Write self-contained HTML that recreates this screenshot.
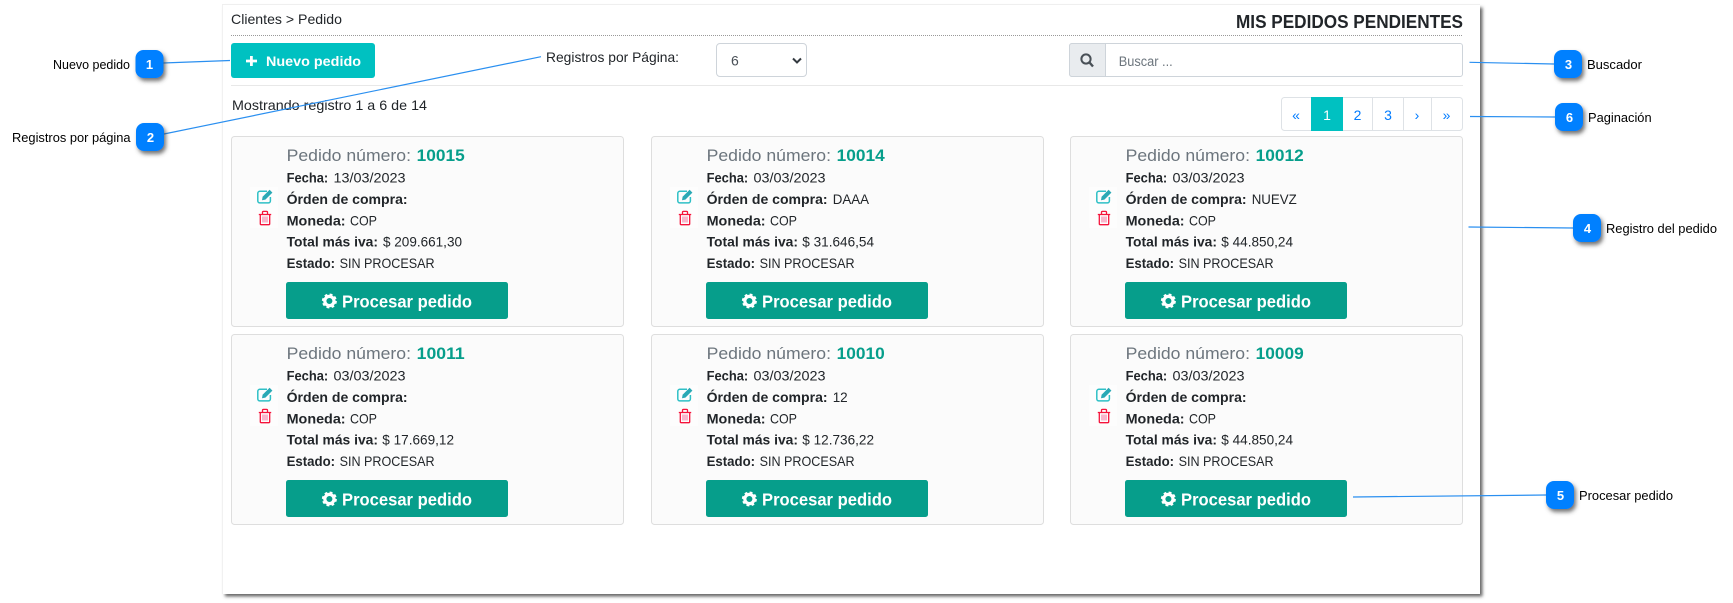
<!DOCTYPE html>
<html lang="es"><head><meta charset="utf-8"><title>Mis pedidos pendientes</title>
<style>
html,body{margin:0;padding:0;background:#fff;width:1733px;height:603px;overflow:hidden}
svg{display:block;font-family:"Liberation Sans",Arial,sans-serif}
.d{font-size:14px;fill:#212529}
.b{font-size:13.5px;fill:#212529;font-weight:bold}
.t{font-size:17px;fill:#6c757d}
.n{font-size:17px;fill:#069e8b;font-weight:bold}
.p{font-size:17.5px;fill:#fff;font-weight:bold}
.c{font-size:12.5px;fill:#000}
.w{font-size:13px;fill:#fff;font-weight:bold;text-anchor:middle}
.l{font-size:14px;fill:#007bff;text-anchor:middle}
.cl{stroke:#2a8ff0;stroke-width:1.2;fill:none}
.bb{fill:#0080ff;filter:url(#bs)}
</style></head><body>
<svg width="1733" height="603" viewBox="0 0 1733 603" xmlns="http://www.w3.org/2000/svg">
<defs>
<filter id="ps" x="-2%" y="-2%" width="104%" height="104%"><feDropShadow dx="2.5" dy="2.5" stdDeviation="1.5" flood-color="#555" flood-opacity=".9"/></filter>
<filter id="bs" x="-30%" y="-30%" width="170%" height="170%"><feDropShadow dx="2" dy="3" stdDeviation="2" flood-color="#444" flood-opacity=".75"/></filter>
<g id="card">
<rect x="231.5" y="136.5" width="392" height="190" rx="3" fill="#fbfbfb" stroke="#dedede"/>
<rect x="250" y="187" width="28" height="41" fill="#fdfdfd"/>
<path d="M267 191.3H259.8a2 2 0 0 0-2 2v7.6a2 2 0 0 0 2 2h8.6a2 2 0 0 0 2-2V197" fill="none" stroke="#2fc0c6" stroke-width="1.5"/>
<path d="M262.6 196.8l7-7 2.8 2.8-7 7-3.4.6z" fill="#2aa9b5"/>
<path d="M260.3 214.5v9.2a1 1 0 0 0 1 1h7.4a1 1 0 0 0 1-1v-9.2M258.8 214.5h12.4M262.5 214v-1.6a1 1 0 0 1 1-1h3a1 1 0 0 1 1 1v1.6" fill="none" stroke="#f5143c" stroke-width="1.3"/>
<path d="M263 216.5v6M265 216.5v6M267 216.5v6" stroke="#f5709a" stroke-width="1"/>
<rect x="286" y="282" width="222" height="37" rx="2.5" fill="#069e8b"/>
<circle cx="329.4" cy="301" r="5.8" fill="none" stroke="#fff" stroke-width="3.4" stroke-dasharray="2.5 2.06"/>
<circle cx="329.4" cy="301" r="4.6" fill="none" stroke="#fff" stroke-width="3.2"/>
<text x="342" y="307.3" class="p" textLength="130" lengthAdjust="spacingAndGlyphs">Procesar pedido</text>
<text x="286.6" y="182.7" class="b" textLength="41.6" lengthAdjust="spacingAndGlyphs">Fecha:</text>
<text x="286.6" y="204" class="b" textLength="121" lengthAdjust="spacingAndGlyphs">Órden de compra:</text>
<text x="286.6" y="225.3" class="b" textLength="59" lengthAdjust="spacingAndGlyphs">Moneda:</text>
<text x="350" y="225.3" class="d" textLength="27" lengthAdjust="spacingAndGlyphs">COP</text>
<text x="286.6" y="246.7" class="b" textLength="91.4" lengthAdjust="spacingAndGlyphs">Total más iva:</text>
<text x="286.6" y="268" class="b" textLength="48.5" lengthAdjust="spacingAndGlyphs">Estado:</text>
<text x="339.6" y="268" class="d" textLength="95" lengthAdjust="spacingAndGlyphs">SIN PROCESAR</text>
<text x="286.6" y="161" class="t" textLength="124.4" lengthAdjust="spacingAndGlyphs">Pedido número:</text>
</g>
</defs>

<rect x="222.5" y="5" width="1257.5" height="589" fill="#fff" filter="url(#ps)"/>
<path d="M222 4.5H1480" stroke="#efefef"/><path d="M222.5 5V594" stroke="#f1f1f1"/>

<text x="231" y="24" class="d" fill="#333" textLength="111" lengthAdjust="spacingAndGlyphs">Clientes &gt; Pedido</text>
<text x="1236" y="28" style="font-size:18px;font-weight:bold;fill:#212529" textLength="227" lengthAdjust="spacingAndGlyphs">MIS PEDIDOS PENDIENTES</text>
<path d="M231 35.5H1463" stroke="#999" stroke-dasharray="1 1"/>

<rect x="231" y="43" width="144" height="35" rx="3" fill="#00c1c1"/>
<path d="M251.4 56v10M246 61h11" stroke="#fff" stroke-width="2.8"/>
<text x="266" y="66" style="font-size:14px;font-weight:bold;fill:#fff" textLength="95" lengthAdjust="spacingAndGlyphs">Nuevo pedido</text>

<text x="546" y="62" class="d" textLength="133" lengthAdjust="spacingAndGlyphs">Registros por Página:</text>
<rect x="716.5" y="43.5" width="90" height="33" rx="3.5" fill="#fff" stroke="#ced4da"/>
<text x="731" y="65.7" style="font-size:14px;fill:#495057">6</text>
<path d="M793 58.5l4 4 4-4" fill="none" stroke="#343a40" stroke-width="2"/>

<path d="M1072 43.5H1460a2.5 2.5 0 0 1 2.5 2.5V74a2.5 2.5 0 0 1-2.5 2.5H1072a2.5 2.5 0 0 1-2.5-2.5V46a2.5 2.5 0 0 1 2.5-2.5z" fill="#fff" stroke="#ced4da"/>
<path d="M1072 43.5H1105.5V76.5H1072a2.5 2.5 0 0 1-2.5-2.5V46a2.5 2.5 0 0 1 2.5-2.5z" fill="#e9ecef" stroke="#ced4da"/>
<circle cx="1086" cy="59" r="4.6" fill="none" stroke="#495057" stroke-width="2"/>
<path d="M1089.5 62.5l3.5 4" stroke="#495057" stroke-width="2.4"/>
<text x="1118.7" y="66" style="font-size:13.5px;fill:#6c757d" textLength="54" lengthAdjust="spacingAndGlyphs">Buscar ...</text>

<path d="M231 85.5H1463" stroke="#e8e8e8"/>
<text x="232" y="110" class="d" textLength="195" lengthAdjust="spacingAndGlyphs">Mostrando registro 1 a 6 de 14</text>

<rect x="1281.5" y="97.5" width="181" height="33" rx="3" fill="#fff" stroke="#dee2e6"/>
<rect x="1311" y="97" width="32" height="34" fill="#00c1c1"/>
<path d="M1372.5 98V130M1403.5 98V130M1431.5 98V130" stroke="#dee2e6"/>
<text x="1296" y="120" class="l">«</text>
<text x="1327" y="120" class="l" style="fill:#fff">1</text>
<text x="1357.5" y="120" class="l">2</text>
<text x="1388" y="120" class="l">3</text>
<text x="1417" y="120" class="l">›</text>
<text x="1446.5" y="120" class="l">»</text>

<use href="#card"/>
<text x="416.7" y="161" class="n" textLength="48" lengthAdjust="spacingAndGlyphs">10015</text>
<text x="333.5" y="182.7" class="d" textLength="72" lengthAdjust="spacingAndGlyphs">13/03/2023</text>
<text x="383" y="246.7" class="d" textLength="79" lengthAdjust="spacingAndGlyphs">$ 209.661,30</text>

<g transform="translate(420,0)"><use href="#card"/>
<text x="416.7" y="161" class="n" textLength="48" lengthAdjust="spacingAndGlyphs">10014</text>
<text x="333.5" y="182.7" class="d" textLength="72" lengthAdjust="spacingAndGlyphs">03/03/2023</text>
<text x="412.7" y="204" class="d" textLength="36.3" lengthAdjust="spacingAndGlyphs">DAAA</text>
<text x="382.3" y="246.7" class="d" textLength="71.7" lengthAdjust="spacingAndGlyphs">$ 31.646,54</text></g>

<g transform="translate(839,0)"><use href="#card"/>
<text x="416.7" y="161" class="n" textLength="48" lengthAdjust="spacingAndGlyphs">10012</text>
<text x="333.5" y="182.7" class="d" textLength="72" lengthAdjust="spacingAndGlyphs">03/03/2023</text>
<text x="412.7" y="204" class="d" textLength="45" lengthAdjust="spacingAndGlyphs">NUEVZ</text>
<text x="382.3" y="246.7" class="d" textLength="71.7" lengthAdjust="spacingAndGlyphs">$ 44.850,24</text></g>

<g transform="translate(0,198)"><use href="#card"/>
<text x="416.7" y="161" class="n" textLength="48" lengthAdjust="spacingAndGlyphs">10011</text>
<text x="333.5" y="182.7" class="d" textLength="72" lengthAdjust="spacingAndGlyphs">03/03/2023</text>
<text x="382.3" y="246.7" class="d" textLength="71.7" lengthAdjust="spacingAndGlyphs">$ 17.669,12</text></g>

<g transform="translate(420,198)"><use href="#card"/>
<text x="416.7" y="161" class="n" textLength="48" lengthAdjust="spacingAndGlyphs">10010</text>
<text x="333.5" y="182.7" class="d" textLength="72" lengthAdjust="spacingAndGlyphs">03/03/2023</text>
<text x="412.7" y="204" class="d" textLength="15" lengthAdjust="spacingAndGlyphs">12</text>
<text x="382.3" y="246.7" class="d" textLength="71.7" lengthAdjust="spacingAndGlyphs">$ 12.736,22</text></g>

<g transform="translate(839,198)"><use href="#card"/>
<text x="416.7" y="161" class="n" textLength="48" lengthAdjust="spacingAndGlyphs">10009</text>
<text x="333.5" y="182.7" class="d" textLength="72" lengthAdjust="spacingAndGlyphs">03/03/2023</text>
<text x="382.3" y="246.7" class="d" textLength="71.7" lengthAdjust="spacingAndGlyphs">$ 44.850,24</text></g>

<path class="cl" d="M163 63L230 60.5"/>
<path class="cl" d="M164 134L541 56.7"/>
<path class="cl" d="M1469.5 62.3L1554 64"/>
<path class="cl" d="M1470 116.5L1555 117"/>
<path class="cl" d="M1468.5 227L1573 228"/>
<path class="cl" d="M1353 497L1546 495"/>

<rect class="bb" x="135.5" y="50" width="28" height="28" rx="8"/>
<text x="149.5" y="69" class="w">1</text>
<text x="53" y="69" class="c" textLength="77" lengthAdjust="spacingAndGlyphs">Nuevo pedido</text>

<rect class="bb" x="136" y="123" width="28" height="28" rx="8"/>
<text x="150.5" y="142" class="w">2</text>
<text x="12" y="142" class="c" textLength="118.6" lengthAdjust="spacingAndGlyphs">Registros por página</text>

<rect class="bb" x="1554" y="50" width="28" height="28" rx="8"/>
<text x="1568.5" y="69" class="w">3</text>
<text x="1587" y="69" class="c" textLength="55" lengthAdjust="spacingAndGlyphs">Buscador</text>

<rect class="bb" x="1555" y="103" width="28" height="28" rx="8"/>
<text x="1569.5" y="122" class="w">6</text>
<text x="1588" y="122" class="c" textLength="63.6" lengthAdjust="spacingAndGlyphs">Paginación</text>

<rect class="bb" x="1573" y="214" width="28" height="28" rx="8"/>
<text x="1587.5" y="233" class="w">4</text>
<text x="1606" y="233" class="c" textLength="111" lengthAdjust="spacingAndGlyphs">Registro del pedido</text>

<rect class="bb" x="1546" y="481" width="28" height="28" rx="8"/>
<text x="1560.5" y="500" class="w">5</text>
<text x="1579" y="500" class="c" textLength="94" lengthAdjust="spacingAndGlyphs">Procesar pedido</text>
</svg>
</body></html>
